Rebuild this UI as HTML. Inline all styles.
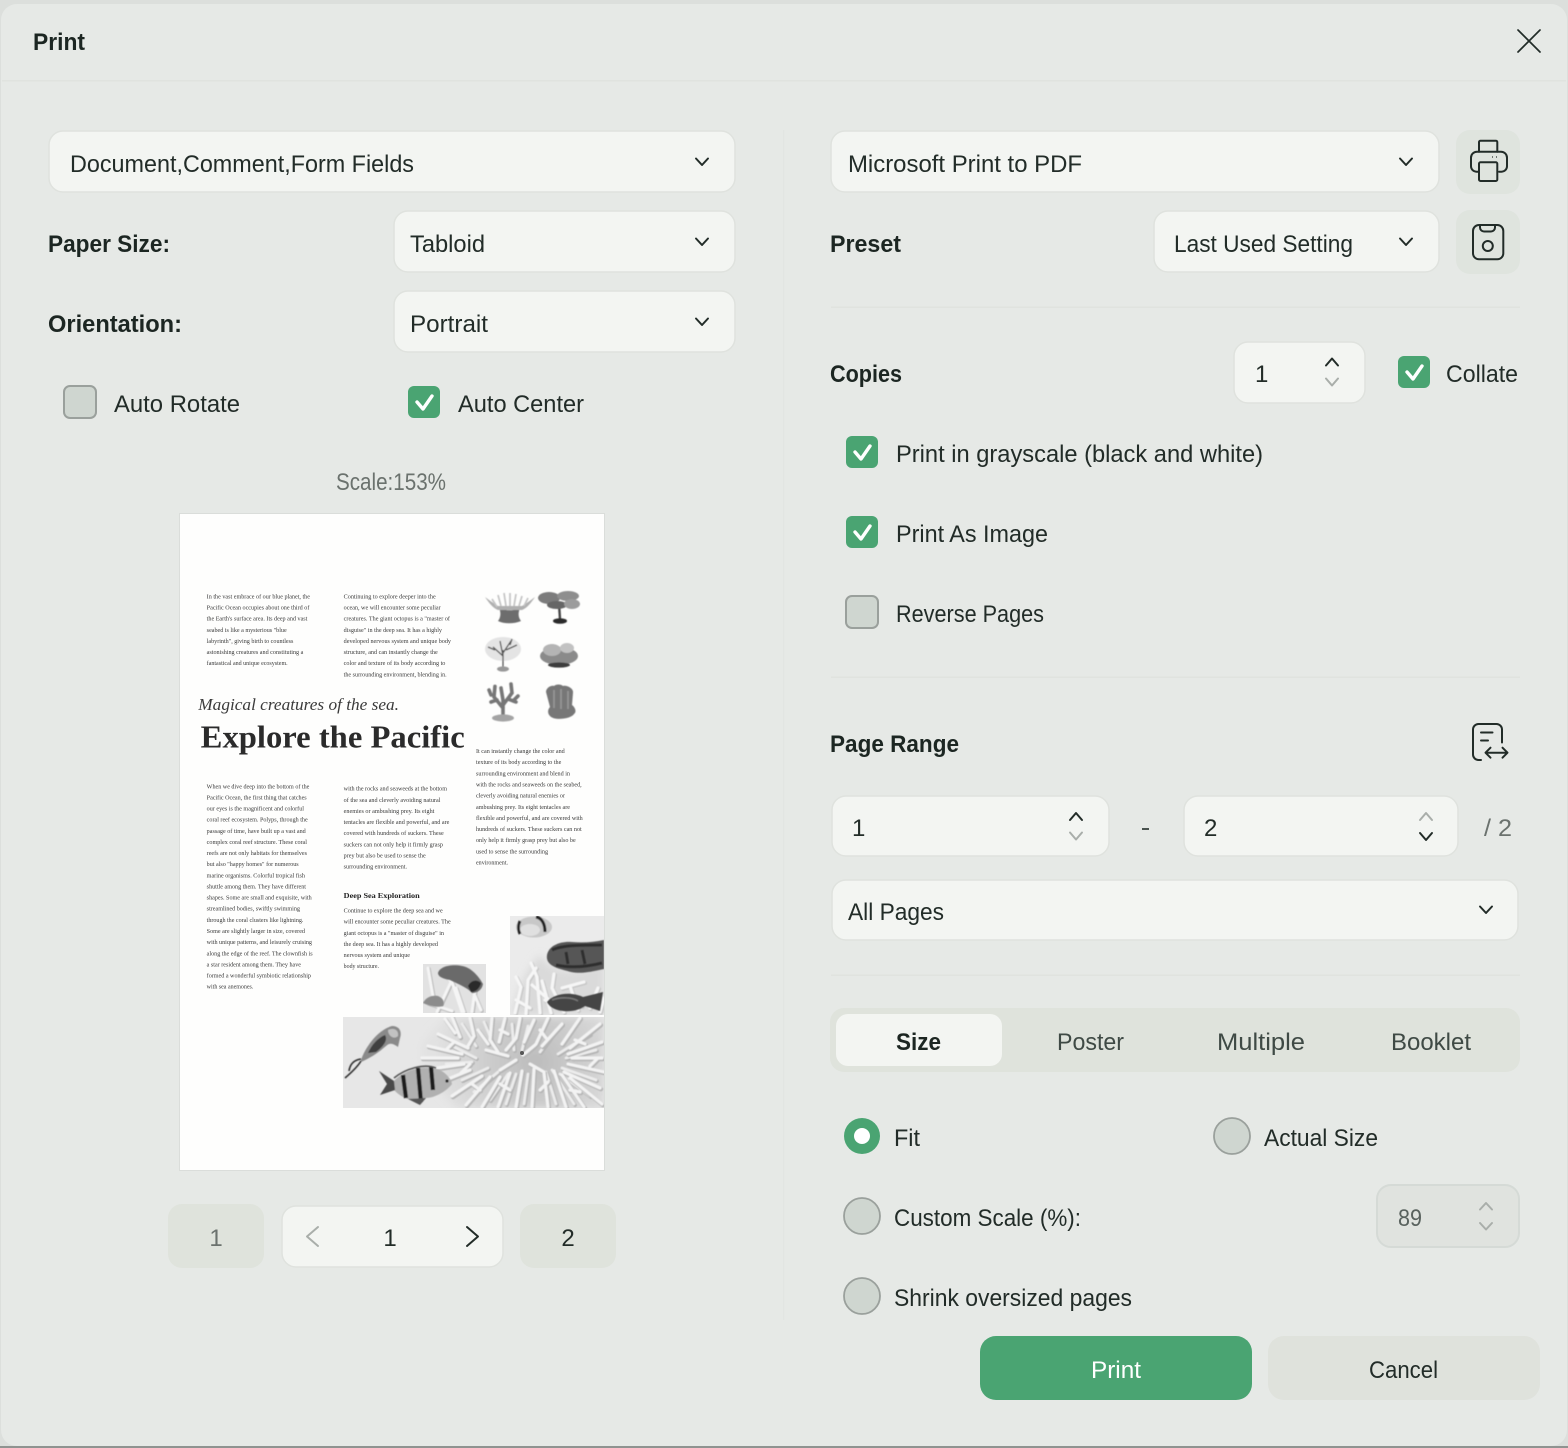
<!DOCTYPE html>
<html><head><meta charset="utf-8"><title>Print</title>
<style>
html,body{margin:0;padding:0;background:#d9dcd9}
svg{display:block}
text{font-family:"Liberation Sans",sans-serif;font-size:24px;fill:#222c28}
.b{font-weight:700;fill:#1c2622}
.g{fill:#6b726e}
.s{fill:#f3f5f2;stroke:#dfe2de;stroke-width:1.5}
.c{fill:none;stroke:#222c28;stroke-width:2;stroke-linecap:round;stroke-linejoin:round}
.l{fill:none;stroke:#a9aeaa;stroke-width:2;stroke-linecap:round;stroke-linejoin:round}
.p text{font-family:"Liberation Serif",serif;font-size:5.8px;fill:#3a3a3a}
</style></head><body>
<svg width="1568" height="1448" viewBox="0 0 1568 1448" xmlns="http://www.w3.org/2000/svg">
<defs>
<filter id="bl"><feGaussianBlur stdDeviation=".38"/></filter>
<filter id="bl2" x="-10%" y="-10%" width="120%" height="120%"><feGaussianBlur stdDeviation=".6"/></filter>
<filter id="bl3" x="-20%" y="-20%" width="140%" height="140%"><feGaussianBlur stdDeviation="4"/></filter>
<radialGradient id="rg" gradientUnits="userSpaceOnUse" cx="535" cy="1062" r="100"><stop offset="0" stop-color="#bcbcbc"/><stop offset=".55" stop-color="#d0d0d0"/><stop offset="1" stop-color="#e2e2e2"/></radialGradient>
<path id="cb" d="M445 1019l10 14M452 1017l8 20M470 1018l4 18l-6 10M478 1030l10 14M492 1018l-2 22l8 12M505 1018l-6 24M520 1018l-4 20l-10 12M534 1020l-10 22M548 1018l-12 26M562 1024l-20 22M580 1018l-18 26M600 1024l-30 24M602 1042l-34 12M602 1058h-30M604 1072l-36-8M600 1088l-36-16M602 1104l-32-26M584 1107l-22-32M566 1107l-12-36M548 1107l-4-34M532 1107l2-38M516 1107l6-36M498 1107l12-34M482 1107l18-30M466 1105l24-28M452 1096l30-20M436 1084l34-14M424 1070l40-6M422 1058h36M428 1046l34 8M438 1034l30 14M470 1064l-10 10M446 1050l8-8M480 1090l-8-6M510 1090l-10-6M540 1090l8-8M570 1090l10 2M590 1066l8-8M575 1040l10 4M540 1030l6 8M500 1030l8 4M486 1050l22 6M500 1070l16-10M530 1064l14 8M535 1045l-12 10"/>
<path id="cb2" d="M462 1024l14 22M484 1022l10 24M512 1024l2 26M528 1026l-6 24M556 1030l-16 22M590 1034l-32 20M596 1050l-30 8M596 1080l-34-12M590 1096l-30-22M574 1104l-22-34M556 1104l-10-32M524 1104l4-30M506 1104l10-30M490 1100l18-26M474 1092l24-20M462 1080l26-12M446 1064l26-2M452 1046l24 12"/>
<path id="cc" d="M515 1013l6-26l-5-10M526 1014l2-34l8-12M540 1013l-3-36l-6-14M551 1013l-9-32M564 1012l-12-24l2-14M578 1010l-8-24M590 1008l8-20M600 1012l4-14M516 1000l14 8M532 985l16 14M562 988l22-6M545 1000l14 8M570 1000l12 6"/>
<path id="cd" d="M428 968l6 34M437 1012l14-30l-8-10M452 982l10 30M464 1012l-8-24M472 1012l3-22M481 1010l-6-14M428 1003l24 8"/>
<clipPath id="c1"><rect x="343" y="1017" width="261" height="91"/></clipPath>
<clipPath id="c2"><rect x="510" y="916" width="94" height="99"/></clipPath>
<clipPath id="c3"><rect x="423" y="964" width="63" height="49"/></clipPath>
</defs>

<rect width="1568" height="1448" fill="#dcdfdc"/>
<rect x="0" y="1446" width="1568" height="2" fill="#8f9390"/>
<rect x="1" y="4" width="1566" height="1442" rx="16" fill="#e6e9e6"/>
<rect x="2" y="80" width="1564" height="1.5" fill="#e0e3df"/>
<rect x="783" y="130" width="1.2" height="1190" fill="#e2e5e2"/>

<text class="b" x="33" y="50" textLength="52" lengthAdjust="spacingAndGlyphs">Print</text>
<path d="M1518 30 L1540 52 M1540 30 L1518 52" fill="none" stroke="#222c28" stroke-width="1.7" stroke-linecap="round"/>

<!-- left controls -->
<rect class="s" x="49" y="131" width="686" height="61" rx="14"/>
<text x="70" y="172" textLength="344" lengthAdjust="spacingAndGlyphs">Document,Comment,Form Fields</text>
<path class="c" d="M696 158.500l6 6.500l6-6.500"/>
<text class="b" x="48" y="252" textLength="122" lengthAdjust="spacingAndGlyphs">Paper Size:</text>
<rect class="s" x="394" y="211" width="341" height="61" rx="14"/>
<text x="410" y="252" textLength="75" lengthAdjust="spacingAndGlyphs">Tabloid</text>
<path class="c" d="M696 238.500l6 6.500l6-6.500"/>
<text class="b" x="48" y="332" textLength="134" lengthAdjust="spacingAndGlyphs">Orientation:</text>
<rect class="s" x="394" y="291" width="341" height="61" rx="14"/>
<text x="410" y="332" textLength="78" lengthAdjust="spacingAndGlyphs">Portrait</text>
<path class="c" d="M696 318.500l6 6.500l6-6.500"/>

<rect x="64" y="386" width="32" height="32" rx="6" fill="#cfd6d0" stroke="#9aa09c" stroke-width="2"/>
<text x="114" y="412" textLength="126" lengthAdjust="spacingAndGlyphs">Auto Rotate</text>
<rect x="408" y="386" width="32" height="32" rx="6" fill="#4aa472"/>
<path d="M417 402l6 7l9-13" fill="none" stroke="#fff" stroke-width="3.400" stroke-linecap="round" stroke-linejoin="round"/>
<text x="458" y="412" textLength="126" lengthAdjust="spacingAndGlyphs">Auto Center</text>
<text class="g" x="336" y="490" textLength="110" lengthAdjust="spacingAndGlyphs">Scale:153%</text>

<!-- preview page -->
<rect x="179" y="513" width="426" height="658" fill="#dadddA"/>
<rect x="180" y="514" width="424" height="656" fill="#fefefd"/>
<g class="p" filter="url(#bl)">
<text x="206.7" y="598.3" textLength="103.3" lengthAdjust="spacingAndGlyphs">In the vast embrace of our blue planet, the</text>
<text x="206.7" y="609.5" textLength="102.7" lengthAdjust="spacingAndGlyphs">Pacific Ocean occupies about one third of</text>
<text x="206.7" y="620.6" textLength="100.7" lengthAdjust="spacingAndGlyphs">the Earth's surface area. Its deep and vast</text>
<text x="206.7" y="631.8" textLength="80" lengthAdjust="spacingAndGlyphs">seabed is like a mysterious "blue</text>
<text x="206.7" y="642.9" textLength="86.7" lengthAdjust="spacingAndGlyphs">labyrinth", giving birth to countless</text>
<text x="206.7" y="654.1" textLength="96.7" lengthAdjust="spacingAndGlyphs">astonishing creatures and constituting a</text>
<text x="206.7" y="665.2" textLength="81" lengthAdjust="spacingAndGlyphs">fantastical and unique ecosystem.</text>

<text x="343.7" y="598.3" textLength="92" lengthAdjust="spacingAndGlyphs">Continuing to explore deeper into the</text>
<text x="343.7" y="609.5" textLength="97" lengthAdjust="spacingAndGlyphs">ocean, we will encounter some peculiar</text>
<text x="343.7" y="620.6" textLength="106.3" lengthAdjust="spacingAndGlyphs">creatures. The giant octopus is a "master of</text>
<text x="343.7" y="631.8" textLength="98.3" lengthAdjust="spacingAndGlyphs">disguise" in the deep sea. It has a highly</text>
<text x="343.7" y="642.9" textLength="107.3" lengthAdjust="spacingAndGlyphs">developed nervous system and unique body</text>
<text x="343.7" y="654.1" textLength="94" lengthAdjust="spacingAndGlyphs">structure, and can instantly change the</text>
<text x="343.7" y="665.2" textLength="101.7" lengthAdjust="spacingAndGlyphs">color and texture of its body according to</text>
<text x="343.7" y="676.4" textLength="103" lengthAdjust="spacingAndGlyphs">the surrounding environment, blending in.</text>

<text x="476" y="753" textLength="88.7" lengthAdjust="spacingAndGlyphs">It can instantly change the color and</text>
<text x="476" y="764.2" textLength="85.3" lengthAdjust="spacingAndGlyphs">texture of its body according to the</text>
<text x="476" y="775.3" textLength="94" lengthAdjust="spacingAndGlyphs">surrounding environment and blend in</text>
<text x="476" y="786.5" textLength="105.7" lengthAdjust="spacingAndGlyphs">with the rocks and seaweeds on the seabed,</text>
<text x="476" y="797.6" textLength="89" lengthAdjust="spacingAndGlyphs">cleverly avoiding natural enemies or</text>
<text x="476" y="808.8" textLength="94" lengthAdjust="spacingAndGlyphs">ambushing prey. Its eight tentacles are</text>
<text x="476" y="819.9" textLength="106.7" lengthAdjust="spacingAndGlyphs">flexible and powerful, and are covered with</text>
<text x="476" y="831" textLength="105.7" lengthAdjust="spacingAndGlyphs">hundreds of suckers. These suckers can not</text>
<text x="476" y="842.2" textLength="99.7" lengthAdjust="spacingAndGlyphs">only help it firmly grasp prey but also be</text>
<text x="476" y="853.3" textLength="72" lengthAdjust="spacingAndGlyphs">used to sense the surrounding</text>
<text x="476" y="864.5" textLength="32" lengthAdjust="spacingAndGlyphs">environment.</text>

<text x="206.7" y="788.3" textLength="102.7" lengthAdjust="spacingAndGlyphs">When we dive deep into the bottom of the</text>
<text x="206.7" y="799.4" textLength="100" lengthAdjust="spacingAndGlyphs">Pacific Ocean, the first thing that catches</text>
<text x="206.7" y="810.6" textLength="97.3" lengthAdjust="spacingAndGlyphs">our eyes is the magnificent and colorful</text>
<text x="206.7" y="821.7" textLength="101" lengthAdjust="spacingAndGlyphs">coral reef ecosystem. Polyps, through the</text>
<text x="206.7" y="832.8" textLength="99" lengthAdjust="spacingAndGlyphs">passage of time, have built up a vast and</text>
<text x="206.7" y="844" textLength="100.3" lengthAdjust="spacingAndGlyphs">complex coral reef structure. These coral</text>
<text x="206.7" y="855.1" textLength="100.3" lengthAdjust="spacingAndGlyphs">reefs are not only habitats for themselves</text>
<text x="206.7" y="866.2" textLength="92" lengthAdjust="spacingAndGlyphs">but also "happy homes" for numerous</text>
<text x="206.7" y="877.3" textLength="98.3" lengthAdjust="spacingAndGlyphs">marine organisms. Colorful tropical fish</text>
<text x="206.7" y="888.5" textLength="99.3" lengthAdjust="spacingAndGlyphs">shuttle among them. They have different</text>
<text x="206.7" y="899.6" textLength="105" lengthAdjust="spacingAndGlyphs">shapes. Some are small and exquisite, with</text>
<text x="206.7" y="910.7" textLength="93.3" lengthAdjust="spacingAndGlyphs">streamlined bodies, swiftly swimming</text>
<text x="206.7" y="921.9" textLength="96.7" lengthAdjust="spacingAndGlyphs">through the coral clusters like lightning.</text>
<text x="206.7" y="933" textLength="98.3" lengthAdjust="spacingAndGlyphs">Some are slightly larger in size, covered</text>
<text x="206.7" y="944.1" textLength="105.3" lengthAdjust="spacingAndGlyphs">with unique patterns, and leisurely cruising</text>
<text x="206.7" y="955.3" textLength="106" lengthAdjust="spacingAndGlyphs">along the edge of the reef. The clownfish is</text>
<text x="206.7" y="966.4" textLength="94.3" lengthAdjust="spacingAndGlyphs">a star resident among them. They have</text>
<text x="206.7" y="977.5" textLength="104.3" lengthAdjust="spacingAndGlyphs">formed a wonderful symbiotic relationship</text>
<text x="206.7" y="988.6" textLength="46.7" lengthAdjust="spacingAndGlyphs">with sea anemones.</text>

<text x="343.7" y="790.6" textLength="103.3" lengthAdjust="spacingAndGlyphs">with the rocks and seaweeds at the bottom</text>
<text x="343.7" y="801.8" textLength="96.7" lengthAdjust="spacingAndGlyphs">of the sea and cleverly avoiding natural</text>
<text x="343.7" y="812.9" textLength="90.7" lengthAdjust="spacingAndGlyphs">enemies or ambushing prey. Its eight</text>
<text x="343.7" y="824.1" textLength="105.7" lengthAdjust="spacingAndGlyphs">tentacles are flexible and powerful, and are</text>
<text x="343.7" y="835.2" textLength="100" lengthAdjust="spacingAndGlyphs">covered with hundreds of suckers. These</text>
<text x="343.7" y="846.4" textLength="99.3" lengthAdjust="spacingAndGlyphs">suckers can not only help it firmly grasp</text>
<text x="343.7" y="857.5" textLength="82" lengthAdjust="spacingAndGlyphs">prey but also be used to sense the</text>
<text x="343.7" y="868.7" textLength="63.3" lengthAdjust="spacingAndGlyphs">surrounding environment.</text>

<text x="343.7" y="898" textLength="76" lengthAdjust="spacingAndGlyphs" style="font-weight:700;font-size:7.4px;fill:#222">Deep Sea Exploration</text>
<text x="343.7" y="912.6" textLength="99" lengthAdjust="spacingAndGlyphs">Continue to explore the deep sea and we</text>
<text x="343.7" y="923.7" textLength="107" lengthAdjust="spacingAndGlyphs">will encounter some peculiar creatures. The</text>
<text x="343.7" y="934.8" textLength="100.3" lengthAdjust="spacingAndGlyphs">giant octopus is a "master of disguise" in</text>
<text x="343.7" y="945.9" textLength="94.3" lengthAdjust="spacingAndGlyphs">the deep sea. It has a highly developed</text>
<text x="343.7" y="957" textLength="66.3" lengthAdjust="spacingAndGlyphs">nervous system and unique</text>
<text x="343.7" y="968.1" textLength="35.3" lengthAdjust="spacingAndGlyphs">body structure.</text>
</g>
<text x="198.3" y="710" textLength="200.7" lengthAdjust="spacingAndGlyphs" style='font-family:"Liberation Serif",serif;font-style:italic;font-size:16.5px;fill:#3a3a3a'>Magical creatures of the sea.</text>
<text x="200.7" y="747.5" textLength="264" lengthAdjust="spacingAndGlyphs" style='font-family:"Liberation Serif",serif;font-weight:700;font-size:31.5px;fill:#2b2b2b'>Explore the Pacific</text>

<!-- coral grid -->
<g filter="url(#bl2)">
<path d="M499 608c5 3 17 3 21 0c-2 5-2 9 1 13c-7 3-17 3-23 0c3-4 3-9 1-13z" fill="#6d6d6d"/>
<path d="M485 597c4 3 8 6 13 9h24c5-3 9-6 13-9c-4 6-8 11-13 13h-24c-5-2-9-7-13-13z" transform="translate(0 0)" fill="#b0b0b0"/>
<path d="M492 599l5 8M498 595l3 11M504 593l2 13M510 593l0 13M516 594l-2 12M522 596l-3 10M528 598l-4 8" stroke="#c4c4c4" stroke-width="1.700" fill="none"/>
<path d="M559 604l1 15" stroke="#444" stroke-width="2.400"/>
<ellipse cx="560" cy="621" rx="7" ry="2.800" fill="#2a2a2a"/>
<ellipse cx="549" cy="598" rx="11" ry="6" fill="#7c7c7c"/>
<ellipse cx="568" cy="596" rx="11" ry="5" fill="#8e8e8e"/>
<ellipse cx="557" cy="605" rx="10" ry="4" fill="#666"/>
<ellipse cx="572" cy="604" rx="8" ry="5" fill="#9c9c9c"/>
<ellipse cx="503" cy="649" rx="18" ry="12" fill="#e4e4e4"/>
<path d="M503 668V650M503 656l-10-9M503 656l-3-15M503 653l8-12M506 650l11-5M495 650l-7-3M510 645l2-6" stroke="#555" stroke-width="1.300" fill="none"/>
<ellipse cx="503" cy="669" rx="6" ry="2.600" fill="#999"/>
<ellipse cx="559" cy="656" rx="19" ry="9" fill="#8a8a8a"/>
<ellipse cx="552" cy="650" rx="9" ry="6" fill="#b4b4b4"/>
<ellipse cx="567" cy="648" rx="7" ry="5" fill="#c2c2c2"/>
<ellipse cx="559" cy="665" rx="11" ry="2.600" fill="#3c3c3c"/>
<path d="M503 716V700M503 708l-9-11M503 705l9-12M497 700l-6 2M494 697l1-11M508 699l8 3M512 693l-1-9M503 700l-2-12M491 695l-2-5M514 700l4-4" stroke="#777" stroke-width="3.600" fill="none" stroke-linecap="round" stroke-dasharray="3 .8"/>
<ellipse cx="503" cy="718" rx="11" ry="3.600" fill="#a4a4a4"/>
<path d="M546 692c0-4 5-7 8-6c2-2 7-2 9 0c3-1 11 2 10 7l-1 12c3 2 5 7 2 9c-3 5-20 7-24 2c-3-3-2-7 0-9z" fill="#777"/>
<path d="M554 690v18M561 689v20M568 691v18" stroke="#999" stroke-width="1.500" fill="none"/>
</g>

<!-- bottom image -->
<g clip-path="url(#c1)">
<rect x="343" y="1017" width="261" height="91" fill="#e7e7e7"/>
<path d="M446 1017C436 1028 420 1040 422 1052C420 1066 434 1080 440 1090C442 1096 452 1102 456 1108H604V1017Z" fill="url(#rg)" filter="url(#bl3)"/>
<g filter="url(#bl2)" fill="none" stroke-linecap="round">
<use href="#cb2" stroke="#b4b4b4" stroke-width="3.600" transform="translate(1 1.200)"/>
<use href="#cb2" stroke="#ececec" stroke-width="2.800"/>
<use href="#cb" stroke="#b6b6b6" stroke-width="4.200" transform="translate(1 1.200)"/>
<use href="#cb" stroke="#f3f3f3" stroke-width="3.200"/>
</g>
<circle cx="522" cy="1053" r="2" fill="#555"/>
<g filter="url(#bl2)">
<path d="M361 1060C366 1046 378 1030 392 1026C400 1026 402 1032 400 1038L398 1047C394 1044 390 1042 386 1046C378 1053 370 1058 361 1062Z" fill="#8a8a8a"/>
<path d="M368 1053C372 1044 378 1038 385 1035C388 1040 384 1046 376 1052Z" fill="#3f3f3f"/>
<path d="M388 1030C394 1027 399 1030 398 1036C394 1040 388 1036 388 1030Z" fill="#c2c2c2"/>
<path d="M361 1059C354 1060 350 1064 349 1071M361 1061C358 1066 352 1072 345 1078" stroke="#2e2e2e" stroke-width="1.600" fill="none"/>
<path d="M379 1071L394 1081C404 1070 424 1064 440 1070C447 1074 451 1079 452 1084C446 1092 434 1098 426 1098L420 1105L408 1099C402 1097 398 1094 394 1090L380 1095L387 1084Z" fill="#b0b0b0"/>
<path d="M379 1071L394 1081L395 1090L380 1095L387 1084Z" fill="#4a4a4a"/>
<path d="M403 1075L406 1098M418 1068L421 1102M431 1067L433 1090" stroke="#1d1d1d" stroke-width="4.200" fill="none"/>
<path d="M408 1099L420 1105L426 1098Z" fill="#555"/>
<path d="M394 1078C405 1069 424 1063 436 1068" stroke="#555" stroke-width="1.600" fill="none"/>
<circle cx="447" cy="1081" r="1.600" fill="#222"/>
</g>
</g>

<!-- upper right image -->
<g clip-path="url(#c2)">
<rect x="510" y="916" width="94" height="99" fill="#ebebeb"/>
<path d="M512 1015C516 990 530 965 540 955C552 975 580 975 604 960V1015Z" fill="#dadada" filter="url(#bl3)"/>
<g filter="url(#bl2)" fill="none" stroke-linecap="round">
<use href="#cc" stroke="#c8c8c8" stroke-width="4" transform="translate(1 1)"/>
<use href="#cc" stroke="#f6f6f6" stroke-width="3.200"/>
</g>
<g filter="url(#bl2)">
<ellipse cx="534" cy="927" rx="18" ry="10.500" fill="#c8c8c8"/>
<ellipse cx="530" cy="930" rx="10" ry="6" fill="#e0e0e0"/>
<path d="M520 921c-2 4-2 9 0 13" stroke="#222" stroke-width="2.800" fill="none"/>
<path d="M536 917c6 1 9 7 9 15" stroke="#222" stroke-width="3" fill="none"/>
<path d="M547 955c2-10 14-14 25-13c12 1 22 0 32-2v29c-14 3-23 5-33 3c-10-3-26-5-24-17z" fill="#575757"/>
<path d="M552 950c10-5 30-5 50-5M556 965c14 3 30 2 46-2M566 952l2 12M582 950l3 14" stroke="#2e2e2e" stroke-width="3" fill="none"/>
<path d="M547 1002c8-10 26-10 36-5l16-4l4-1l-3 19l-15-5c-10 8-33 7-38-4z" fill="#454545"/>
<path d="M552 1000c8-3 20-3 26 1" stroke="#777" stroke-width="1.600" fill="none"/>
</g>
</g>

<!-- small image -->
<g clip-path="url(#c3)">
<rect x="423" y="964" width="63" height="49" fill="#e2e2e2"/>
<g filter="url(#bl2)" fill="none" stroke-linecap="round">
<use href="#cd" stroke="#bcbcbc" stroke-width="3.600" transform="translate(1 1)"/>
<use href="#cd" stroke="#f5f5f5" stroke-width="3"/>
</g>
<g filter="url(#bl2)">
<path d="M438 973c2-7 14-9 24-7c8 1 16 9 21 18c-1 6-6 9-11 9c-4-5-14-9-22-13c-6-1-12-3-12-7z" fill="#6a6a6a"/>
<path d="M468 986c3-6 9-7 13-3c-1 5-5 9-10 9z" fill="#2a2a2a"/>
<path d="M423 1003c3-6 9-8 15-7c5 2 7 6 5 10c-6 2-14 0-20-3z" fill="#8c8c8c"/>
</g>
</g>

<!-- pager -->
<rect x="168" y="1204" width="96" height="64" rx="14" fill="#dfe3dc"/>
<text class="g" x="216" y="1246" text-anchor="middle">1</text>
<rect class="s" x="282" y="1206" width="221" height="61" rx="14"/>
<path class="l" d="M318 1227l-11 9.500l11 9.500"/>
<text x="390" y="1246" text-anchor="middle">1</text>
<path class="c" d="M467 1227l11 9.500l-11 9.500"/>
<rect x="520" y="1204" width="96" height="64" rx="14" fill="#dfe3dc"/>
<text x="568" y="1246" text-anchor="middle">2</text>

<!-- right controls -->
<rect class="s" x="831" y="131" width="608" height="61" rx="14"/>
<text x="848" y="172" textLength="234" lengthAdjust="spacingAndGlyphs">Microsoft Print to PDF</text>
<path class="c" d="M1400 158.500l6 6.500l6-6.500"/>
<rect x="1456" y="130" width="64" height="64" rx="14" fill="#dfe4de"/>
<path class="c" d="M1479 151.700v-9.500a1.500 1.500 0 0 1 1.500-1.500h15.300a1.500 1.500 0 0 1 1.500 1.500v9.500"/>
<path class="c" d="M1479 171.700h-2.500a5.500 5.500 0 0 1-5.500-5.500v-8.500a6 6 0 0 1 6-6h24a6 6 0 0 1 6 6v8.500a5.500 5.500 0 0 1-5.500 5.500h-2.500"/>
<rect x="1479" y="162.300" width="18.300" height="18.700" rx="1.500" class="c"/>
<path d="M1492 157h.8M1496 157h.8" stroke="#222c28" stroke-width="1.600" fill="none"/>

<text class="b" x="830" y="252" textLength="71" lengthAdjust="spacingAndGlyphs">Preset</text>
<rect class="s" x="1154" y="211" width="285" height="61" rx="14"/>
<text x="1174" y="252" textLength="179" lengthAdjust="spacingAndGlyphs">Last Used Setting</text>
<path class="c" d="M1400 238.500l6 6.500l6-6.500"/>
<rect x="1456" y="210" width="64" height="64" rx="14" fill="#dfe4de"/>
<rect x="1473" y="225" width="30.300" height="34.300" rx="6" class="c"/>
<path class="c" d="M1480 225v2.500a4 4 0 0 0 4 4h7a4 4 0 0 0 4-4v-2.500"/>
<circle cx="1487.800" cy="246" r="5" class="c"/>

<rect x="831" y="306.500" width="689" height="1.500" fill="#e0e3df"/>

<text class="b" x="830" y="382" textLength="72" lengthAdjust="spacingAndGlyphs">Copies</text>
<rect class="s" x="1234" y="342" width="131" height="61" rx="14"/>
<text x="1255" y="382">1</text>
<path class="c" d="M1326 365.500l6-7l6 7"/>
<path class="l" d="M1326 378.500l6 7l6-7"/>
<rect x="1398" y="356" width="32" height="32" rx="6" fill="#4aa472"/>
<path d="M1407 372l6 7l9-13" fill="none" stroke="#fff" stroke-width="3.400" stroke-linecap="round" stroke-linejoin="round"/>
<text x="1446" y="382" textLength="72" lengthAdjust="spacingAndGlyphs">Collate</text>

<rect x="846" y="436" width="32" height="32" rx="6" fill="#4aa472"/>
<path d="M855 452l6 7l9-13" fill="none" stroke="#fff" stroke-width="3.400" stroke-linecap="round" stroke-linejoin="round"/>
<text x="896" y="462" textLength="367" lengthAdjust="spacingAndGlyphs">Print in grayscale (black and white)</text>
<rect x="846" y="516" width="32" height="32" rx="6" fill="#4aa472"/>
<path d="M855 532l6 7l9-13" fill="none" stroke="#fff" stroke-width="3.400" stroke-linecap="round" stroke-linejoin="round"/>
<text x="896" y="542" textLength="152" lengthAdjust="spacingAndGlyphs">Print As Image</text>
<rect x="846" y="596" width="32" height="32" rx="6" fill="#cfd6d0" stroke="#9aa09c" stroke-width="2"/>
<text x="896" y="622" textLength="148" lengthAdjust="spacingAndGlyphs">Reverse Pages</text>

<rect x="831" y="676.500" width="689" height="1.500" fill="#e0e3df"/>

<text class="b" x="830" y="752" textLength="129" lengthAdjust="spacingAndGlyphs">Page Range</text>
<path class="c" d="M1481 760h-2.500a5.500 5.500 0 0 1-5.500-5.500v-25a5.500 5.500 0 0 1 5.500-5.500h18a5.500 5.500 0 0 1 5.500 5.500v13"/>
<path class="c" d="M1481 732.500h11.500M1481 740.500h7"/>
<path class="c" d="M1486 752.700h20.500M1490.500 747.700l-5 5l5 5M1502.500 747.700l5 5l-5 5"/>

<rect class="s" x="832" y="796" width="277" height="60" rx="14"/>
<text x="852" y="836">1</text>
<path class="c" d="M1070 820l6-7l6 7"/>
<path class="l" d="M1070 832.500l6 7l6-7"/>
<rect x="1142" y="828" width="7" height="2" fill="#4a534f"/>
<rect class="s" x="1184" y="796" width="274" height="60" rx="14"/>
<text x="1204" y="836">2</text>
<path class="l" d="M1420 820l6-7l6 7"/>
<path class="c" d="M1420 833l6 7l6-7"/>
<text class="g" x="1484" y="836" textLength="28" lengthAdjust="spacingAndGlyphs">/ 2</text>

<rect class="s" x="832" y="880" width="686" height="60" rx="14"/>
<text x="848" y="920" textLength="96" lengthAdjust="spacingAndGlyphs">All Pages</text>
<path class="c" d="M1480 906.500l6 6.500l6-6.500"/>

<rect x="831" y="974.500" width="689" height="1.500" fill="#e0e3df"/>

<rect x="830" y="1008" width="690" height="64" rx="14" fill="#dfe3dc"/>
<rect x="836" y="1014" width="166" height="52" rx="12" fill="#f3f5f2"/>
<text class="b" x="896" y="1050" textLength="45" lengthAdjust="spacingAndGlyphs">Size</text>
<text x="1057" y="1050" textLength="67" lengthAdjust="spacingAndGlyphs" style="fill:#3f4a45">Poster</text>
<text x="1217" y="1050" textLength="88" lengthAdjust="spacingAndGlyphs" style="fill:#3f4a45">Multiple</text>
<text x="1391" y="1050" textLength="80" lengthAdjust="spacingAndGlyphs" style="fill:#3f4a45">Booklet</text>

<circle cx="862" cy="1136" r="18" fill="#4aa472"/>
<circle cx="862" cy="1136" r="8" fill="#fff"/>
<text x="894" y="1146" textLength="26" lengthAdjust="spacingAndGlyphs">Fit</text>
<circle cx="1232" cy="1136" r="18" fill="#cfd6d0" stroke="#9aa09c" stroke-width="1.800"/>
<text x="1264" y="1146" textLength="114" lengthAdjust="spacingAndGlyphs">Actual Size</text>
<circle cx="862" cy="1216" r="18" fill="#cfd6d0" stroke="#9aa09c" stroke-width="1.800"/>
<text x="894" y="1226" textLength="187" lengthAdjust="spacingAndGlyphs">Custom Scale (%):</text>
<rect x="1377" y="1185" width="142" height="62" rx="14" fill="#e0e3df" stroke="#d5dad6" stroke-width="2"/>
<text x="1398" y="1226" textLength="24" lengthAdjust="spacingAndGlyphs" style="fill:#59625e">89</text>
<path class="l" d="M1480 1209.500l6-6.500l6 6.500"/>
<path class="l" d="M1480 1223l6 6.500l6-6.500"/>
<circle cx="862" cy="1296" r="18" fill="#cfd6d0" stroke="#9aa09c" stroke-width="1.800"/>
<text x="894" y="1306" textLength="238" lengthAdjust="spacingAndGlyphs">Shrink oversized pages</text>

<rect x="980" y="1336" width="272" height="64" rx="16" fill="#4aa472"/>
<text x="1091" y="1378" textLength="50" lengthAdjust="spacingAndGlyphs" style="fill:#fff">Print</text>
<rect x="1268" y="1336" width="272" height="64" rx="16" fill="#dfe2dc"/>
<text x="1369" y="1378" textLength="69" lengthAdjust="spacingAndGlyphs">Cancel</text>
</svg>
</body></html>
